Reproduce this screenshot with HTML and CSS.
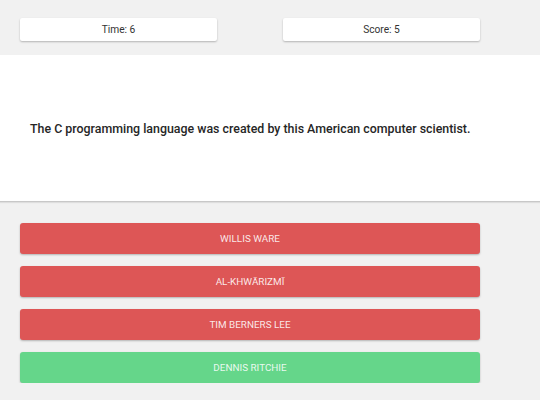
FILE: index.html
```html
<!DOCTYPE html>
<html>
<head>
<meta charset="utf-8">
<link rel="stylesheet" href="styles.css">
</head>
<body>
<div class="top">
  <div class="stat">Time: 6</div>
  <div class="stat">Score: 5</div>
</div>
<div class="question">
  <p>The C programming language was created by this American computer scientist.</p>
</div>
<div class="answers">
  <button class="answer wrong">Willis Ware</button>
  <button class="answer wrong">Al-Khwārizmī</button>
  <button class="answer wrong">Tim Berners Lee</button>
  <button class="answer right">Dennis Ritchie</button>
</div>
</body>
</html>
```
FILE: styles.css
```css
html, body {
  margin: 0;
  padding: 0;
  background: #f1f1f1;
  font-family: Roboto, "Liberation Sans", sans-serif;
}
.top {
  display: flex;
  justify-content: space-between;
  width: 460px;
  padding: 18px 0 0 20px;
  height: 37px;
}
.stat {
  width: 197px;
  height: 23px;
  background: #fff;
  border-radius: 2px;
  box-shadow: 0 1px 2px rgba(0,0,0,0.25);
  font-size: 10.2px;
  color: #333;
  display: flex;
  align-items: center;
  justify-content: center;
}
.question {
  background: #fff;
  height: 146px;
  border-bottom: 1px solid #c8c8c8;
  box-shadow: 0 1px 1px rgba(0,0,0,0.08);
  display: flex;
  align-items: center;
  padding: 0 30px;
}
.question p {
  margin: 0;
  font-size: 12.4px;
  font-weight: 500;
  color: #262626;
}
.answers {
  display: flex;
  flex-direction: column;
  gap: 12px;
  width: 460px;
  padding: 21px 0 0 20px;
}
.answer {
  height: 31px;
  border: none;
  border-radius: 3px;
  box-shadow: 0 1px 2px rgba(0,0,0,0.25);
  font-family: Roboto, "Liberation Sans", sans-serif;
  font-size: 9.9px;
  text-transform: uppercase;
  color: rgba(255,255,255,0.88);
  padding: 0;
}
.wrong { background: #dd5656; }
.right { background: #65d68a; }
```
